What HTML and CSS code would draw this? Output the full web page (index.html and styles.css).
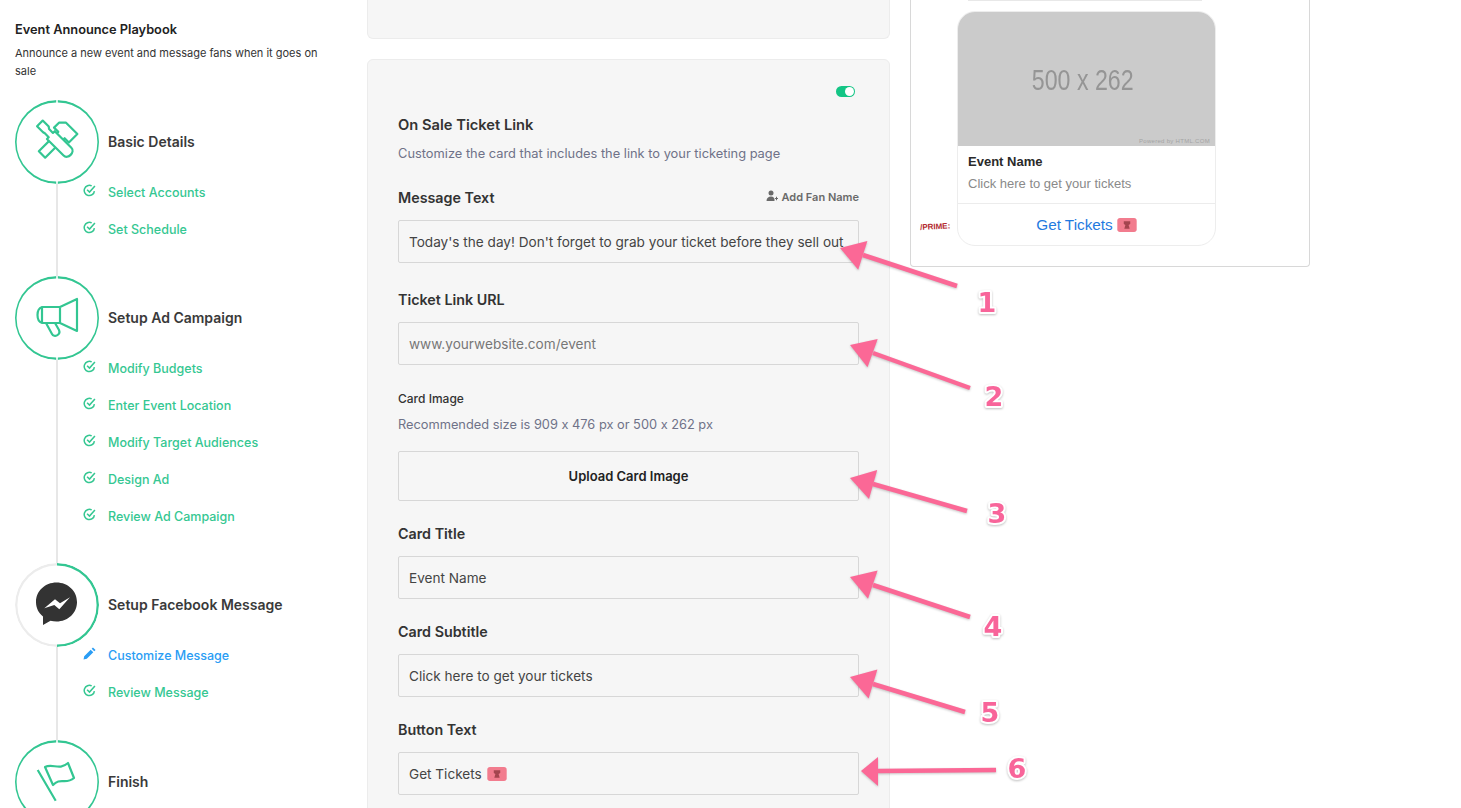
FILE: index.html
```html
<!DOCTYPE html>
<html lang="en">
<head>
<meta charset="utf-8">
<title>Event Announce Playbook</title>
<link rel="stylesheet" href="styles.css">
</head>
<body>
<div class="page">
  <aside class="sidebar">
    <h1 class="pb-title">Event Announce Playbook</h1>
    <p class="pb-desc">Announce a new event and message fans when it goes on sale</p>
    <div class="steps">
      <section class="step">
        <div class="step-head">
          <svg class="ring" viewBox="0 0 84 84"><path class="arc-green" d="M42.800 1.200A40.800 40.800 0 0 1 42.800 82.800M41.200 82.800A40.800 40.800 0 0 1 41.200 1.200"/><g class="ico"><path transform="rotate(45 41.500 40)" d="M37 33H31V26l5-5H52V33H46V60.500H37z"/><path class="cover" transform="rotate(-45 41.500 40)" d="M37.500 16.500h8V25l-1.500 2v5.500h2.500V56c0 6-11 6-11 0V32.500H38V27l-.5-2z"/></g></svg>
          <h2 class="step-name">Basic Details</h2>
        </div>
        <ul class="items">
          <li class="item done"><svg class="it" viewBox="0 0 12 12"><path d="M10.500 6.500A4.700 4.700 0 1 1 8 1.800M3.800 5.300L6 7.500 11 1.800"/></svg>Select Accounts</li>
          <li class="item done"><svg class="it" viewBox="0 0 12 12"><path d="M10.500 6.500A4.700 4.700 0 1 1 8 1.800M3.800 5.300L6 7.500 11 1.800"/></svg>Set Schedule</li>
        </ul>
      </section>
      <section class="step">
        <div class="step-head">
          <svg class="ring" viewBox="0 0 84 84"><path class="arc-green" d="M42.800 1.200A40.800 40.800 0 0 1 42.800 82.800M41.200 82.800A40.800 40.800 0 0 1 41.200 1.200"/><g class="ico"><path d="M27 31H45L62 23V55L45 47H27zM45 31V47M27 31c-6 2-6 14 0 16M31 47l6 11c2 4 9 1 7-4l-4-7"/></g></svg>
          <h2 class="step-name">Setup Ad Campaign</h2>
        </div>
        <ul class="items">
          <li class="item done"><svg class="it" viewBox="0 0 12 12"><path d="M10.500 6.500A4.700 4.700 0 1 1 8 1.800M3.800 5.300L6 7.500 11 1.800"/></svg>Modify Budgets</li>
          <li class="item done"><svg class="it" viewBox="0 0 12 12"><path d="M10.500 6.500A4.700 4.700 0 1 1 8 1.800M3.800 5.300L6 7.500 11 1.800"/></svg>Enter Event Location</li>
          <li class="item done"><svg class="it" viewBox="0 0 12 12"><path d="M10.500 6.500A4.700 4.700 0 1 1 8 1.800M3.800 5.300L6 7.500 11 1.800"/></svg>Modify Target Audiences</li>
          <li class="item done"><svg class="it" viewBox="0 0 12 12"><path d="M10.500 6.500A4.700 4.700 0 1 1 8 1.800M3.800 5.300L6 7.500 11 1.800"/></svg>Design Ad</li>
          <li class="item done"><svg class="it" viewBox="0 0 12 12"><path d="M10.500 6.500A4.700 4.700 0 1 1 8 1.800M3.800 5.300L6 7.500 11 1.800"/></svg>Review Ad Campaign</li>
        </ul>
      </section>
      <section class="step step-tall">
        <div class="step-head">
          <svg class="ring" viewBox="0 0 84 84"><path class="arc-grey" d="M42 82.800A40.800 40.800 0 0 1 42 1.200"/><path class="arc-green" d="M42 1.200A40.800 40.800 0 0 1 42 82.800"/><path class="msgr" d="M41.500 19.500C30 19.500 21 28 21 39c0 6 2.600 11 7 14.500V62l7.500-4.300c2 .6 3.900.8 6 .8C53 58.500 62 50 62 39S53 19.500 41.500 19.500z"/><path class="bolt" d="M29.300 45.300L40 36.300l5 4 10-6-10.700 12-5-4.300z"/></svg>
          <h2 class="step-name">Setup Facebook Message</h2>
        </div>
        <ul class="items">
          <li class="item active"><svg class="it-solid" viewBox="0 0 12 12"><path d="M0.500 11.500l.6-3 6-6 2.400 2.400-6 6zM8 1.500l1.200-1.100 2.400 2.400-1.200 1.200z"/></svg>Customize Message</li>
          <li class="item done"><svg class="it" viewBox="0 0 12 12"><path d="M10.500 6.500A4.700 4.700 0 1 1 8 1.800M3.800 5.300L6 7.500 11 1.800"/></svg>Review Message</li>
        </ul>
      </section>
      <section class="step">
        <div class="step-head">
          <svg class="ring" viewBox="0 0 84 84"><path class="arc-green" d="M42.800 1.200A40.800 40.800 0 0 1 42.800 82.800M41.200 82.800A40.800 40.800 0 0 1 41.200 1.200"/><g class="ico"><path d="M22.700 30L40.700 60.700M30 27c8-4 14 4 23-4l6 15c-8 7-14-1-21 7z"/></g></svg>
          <h2 class="step-name">Finish</h2>
        </div>
      </section>
    </div>
  </aside>

  <main class="main">
    <div class="card-prev"></div>
    <div class="card">
      <div class="toggle-row"><span class="toggle"></span></div>
      <h3 class="card-title">On Sale Ticket Link</h3>
      <p class="card-sub">Customize the card that includes the link to your ticketing page</p>

      <div class="label-row first">
        <span class="label">Message Text</span>
        <span class="fan"><svg class="fan-ico" viewBox="0 0 12 12"><circle cx="5" cy="3" r="2.500"/><path d="M0.500 11c0-3 2-4.500 4.500-4.500S9 8 8.500 11zM9 8h1V6.800h1V8h1v1h-1v1.200h-1V9H9z"/></svg>Add Fan Name</span>
      </div>
      <div class="input">Today's the day! Don't forget to grab your ticket before they sell out</div>

      <div class="label-row wide"><span class="label">Ticket Link URL</span></div>
      <div class="input placeholder">www.yourwebsite.com/event</div>

      <div class="mini-label">Card Image</div>
      <div class="hint">Recommended size is 909 x 476 px or 500 x 262 px</div>
      <div class="upload">Upload Card Image</div>

      <div class="label-row"><span class="label">Card Title</span></div>
      <div class="input">Event Name</div>

      <div class="label-row"><span class="label">Card Subtitle</span></div>
      <div class="input">Click here to get your tickets</div>

      <div class="label-row"><span class="label">Button Text</span></div>
      <div class="input">Get Tickets <svg class="ticket" viewBox="0 0 18 13"><rect width="18" height="13" rx="2.500"/><path d="M6 3h6v2.500l-1.500 1 1 3.500h-5l1-3.500L6 5.500z"/></svg></div>
    </div>
  </main>

  <aside class="preview">
    <div class="preview-box">
      <div class="prev-edge"></div>
      <div class="msg-row">
        <span class="brand">/PRIME:</span>
        <div class="bubble">
          <div class="ph">
            <span class="ph-text">500 x 262</span>
            <span class="ph-credit">Powered by HTML.COM</span>
          </div>
          <div class="bubble-body">
            <div class="bubble-title">Event Name</div>
            <div class="bubble-sub">Click here to get your tickets</div>
          </div>
          <div class="bubble-btn">Get Tickets <svg class="ticket" viewBox="0 0 18 13"><rect width="18" height="13" rx="2.500"/><path d="M6 3h6v2.500l-1.500 1 1 3.500h-5l1-3.500L6 5.500z"/></svg></div>
        </div>
      </div>
    </div>
  </aside>
</div>

<svg class="notes" viewBox="0 0 1461 808">
  <g class="arrow">
    <line x1="863" y1="255" x2="957" y2="286"/><polygon points="840,248 858.200,269.700 867.400,241.100"/>
    <line x1="873" y1="353" x2="970" y2="388"/><polygon points="850,345 867.500,367.200 877.700,339"/>
    <line x1="873" y1="484" x2="967" y2="511"/><polygon points="850,478 869,498.900 877.200,470.100"/>
    <line x1="873" y1="585" x2="970" y2="617"/><polygon points="850,577 868,598.800 877.600,570.400"/>
    <line x1="873" y1="684" x2="965" y2="712"/><polygon points="850,677 868.600,698.400 877.400,669.600"/>
    <line x1="878" y1="771" x2="996" y2="770"/><polygon points="861,771 878,757 878,786"/>
  </g>
  <g class="num">
    <text x="987" y="312">1</text>
    <text x="994" y="406">2</text>
    <text x="997" y="523">3</text>
    <text x="993" y="636">4</text>
    <text x="990" y="722">5</text>
    <text x="1017" y="778">6</text>
  </g>
</svg>
</body>
</html>
```
FILE: styles.css
```css
* { box-sizing: border-box; }
html, body { margin: 0; padding: 0; background: #fff; }
body { position: relative; width: 1461px; height: 808px; overflow: hidden; font-family: Inter, "Liberation Sans", sans-serif; font-feature-settings: "calt" 0; color: #333; }
.page { display: flex; height: 808px; overflow: hidden; }

/* sidebar */
.sidebar { width: 367px; flex: none; padding: 21px 0 0 15px; }
.pb-title { margin: 0; font-size: 12.800px; line-height: 18px; font-weight: 600; color: #222; }
.pb-desc { margin: 5px 0 0; width: 312px; font-size: 11px; line-height: 18px; color: #333; }
.steps { position: relative; margin-top: 20px; }
.steps::before { content: ""; position: absolute; left: 41px; top: 40px; bottom: -100px; width: 2px; background: #e7e7e7; }
.step { position: relative; margin-bottom: 39px; }
.step-tall { margin-bottom: 40px; }
.step-head { display: flex; align-items: center; gap: 9px; height: 84px; }
.ring { width: 84px; height: 84px; flex: none; background: #fff; border-radius: 50%; }
.arc-green, .arc-grey { fill: none; stroke-width: 2.400; }
.arc-green { stroke: #33c692; }
.arc-grey { stroke: #ececec; }
.ico path { fill: none; stroke: #33c692; stroke-width: 2.200; stroke-linejoin: round; }
.ico path.cover { fill: #fff; }
.msgr { fill: #333; }
.bolt { fill: #fff; }
.step-name { margin: 0; font-size: 14px; line-height: 20px; font-weight: 600; color: #3a3a3a; }
.items { position: relative; list-style: none; margin: 0; padding: 0 0 0 68px; display: flex; flex-direction: column; gap: 21px; }
.item { display: flex; align-items: center; gap: 12px; height: 16px; font-size: 12.500px; font-weight: 500; }
.done { color: #35c792; }
.active { color: #2a9df4; }
.it { width: 13px; height: 13px; flex: none; margin-top: -3px; fill: none; stroke: #35c792; stroke-width: 1.400; }
.it-solid { width: 13px; height: 13px; flex: none; margin-top: -3px; fill: #2a9df4; }

/* middle */
.main { width: 523px; flex: none; }
.card-prev { height: 39px; background: #f6f6f6; border: 1px solid #ececec; border-top: 0; border-radius: 0 0 6px 6px; }
.card { margin-top: 20px; padding: 26px 30px 40px; background: #f6f6f6; border: 1px solid #ececec; border-radius: 6px; }
.toggle-row { display: flex; justify-content: flex-end; padding-right: 4px; }
.toggle { position: relative; width: 19px; height: 11px; border-radius: 6px; background: #14c585; }
.toggle::after { content: ""; position: absolute; right: 1px; top: 1px; width: 9px; height: 9px; border-radius: 50%; background: #fff; }
.card-title { margin: 18px 0 0; font-size: 14.700px; line-height: 20px; font-weight: 600; color: #333; }
.card-sub { margin: 10px 0 0; font-size: 12.850px; line-height: 18px; color: #6f7288; }
.label-row { display: flex; justify-content: space-between; align-items: center; height: 20px; margin: 22px 0 13px; }
.label-row.first { margin-top: 24px; }
.label-row.wide { margin-top: 26px; }
.label { font-size: 14.300px; font-weight: 600; color: #333; }
.fan { display: flex; align-items: center; gap: 4px; font-size: 11px; font-weight: 600; color: #6a6a6a; }
.fan-ico { width: 12px; height: 12px; fill: #6a6a6a; margin-top: -2px; }
.input { display: flex; align-items: center; gap: 5px; height: 43px; padding: 0 10px; background: #f6f6f6; border: 1px solid #d7d7d7; border-radius: 2px; font-size: 13.600px; color: #444; white-space: nowrap; overflow: hidden; }
.placeholder { color: #777; }
.ticket { width: 20px; height: 14px; flex: none; }
.ticket rect { fill: #f27c8e; }
.ticket path { fill: #a5454f; }
.mini-label { margin-top: 25px; font-size: 12px; line-height: 18px; font-weight: 500; color: #333; }
.hint { margin-top: 8px; font-size: 12.800px; line-height: 18px; color: #6f7288; }
.upload { display: flex; align-items: center; justify-content: center; height: 50px; margin-top: 17px; border: 1px solid #d7d7d7; border-radius: 2px; font-size: 13px; font-weight: 600; color: #222; }

/* right preview */
.preview { width: 400px; flex: none; margin-left: 20px; }
.preview-box { position: relative; height: 267px; background: #fff; border: 1px solid #d8d8d8; border-top: 0; border-radius: 0 0 4px 4px; }
.prev-edge { width: 234px; height: 1px; margin-left: 57px; background: #e8e8e8; }
.msg-row { display: flex; align-items: flex-end; margin-top: 10px; padding-left: 9px; }
.brand { width: 37px; flex: none; margin-bottom: 15px; font: 700 8px "Liberation Sans", sans-serif; color: #b3282d; transform: rotate(-3deg); }
.bubble { width: 259px; height: 235px; background: #fff; border: 1px solid #ededed; border-radius: 18px; overflow: hidden; font-family: "Liberation Sans", Arial, sans-serif; }
.ph { position: relative; display: flex; align-items: center; justify-content: center; height: 134px; padding: 2px 8px 0 0; background: #cbcbcb; }
.ph-text { font-size: 29px; color: #959595; transform: scaleX(.8); }
.ph-credit { position: absolute; right: 5px; bottom: 2px; font-size: 6px; letter-spacing: .3px; color: #a4a4a4; }
.bubble-body { height: 58px; padding: 8px 10px 0; border-bottom: 1px solid #ececec; }
.bubble-title { font-size: 13px; line-height: 16px; font-weight: 700; color: #2a2a2a; }
.bubble-sub { margin-top: 6px; font-size: 13px; line-height: 16px; color: #8a8a8a; }
.bubble-btn { display: flex; align-items: center; justify-content: center; gap: 4px; height: 41px; font-size: 15.300px; color: #1f7ae0; }

/* annotations over the screenshot */
.notes { position: absolute; left: 0; top: 0; width: 1461px; height: 808px; pointer-events: none; }
.arrow { filter: drop-shadow(0 1px 1px rgba(0,0,0,.22)); }
.arrow line { stroke: #fb6896; stroke-width: 4.500; }
.arrow polygon { fill: #fb6896; }
.num text { font: 700 27px "DejaVu Sans", sans-serif; text-anchor: middle; fill: #f8659a; stroke: #fff; stroke-width: 4px; paint-order: stroke; stroke-linejoin: round; filter: drop-shadow(0 1px 1px rgba(0,0,0,.25)); }
```
